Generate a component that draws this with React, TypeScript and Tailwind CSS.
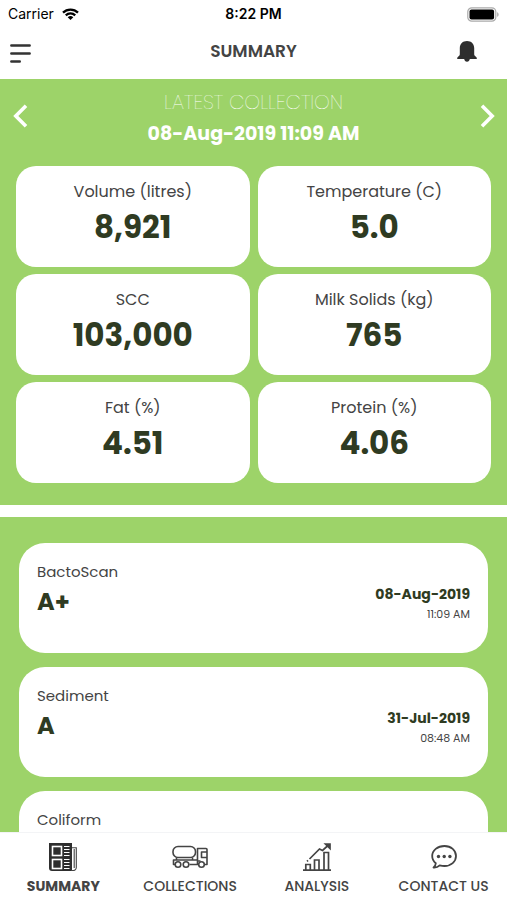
type IconProps = { className?: string };

type Test = { name: string; grade?: string; date?: string; time?: string };

const readings = [
  { label: 'Volume (litres)', value: '8,921' },
  { label: 'Temperature (C)', value: '5.0' },
  { label: 'SCC', value: '103,000' },
  { label: 'Milk Solids (kg)', value: '765' },
  { label: 'Fat (%)', value: '4.51' },
  { label: 'Protein (%)', value: '4.06' },
];

const tests: Test[] = [
  { name: 'BactoScan', grade: 'A+', date: '08-Aug-2019', time: '11:09 AM' },
  { name: 'Sediment', grade: 'A', date: '31-Jul-2019', time: '08:48 AM' },
  { name: 'Coliform' },
];

const tabs = [
  { name: 'SUMMARY', icon: NewsIcon, size: 'size-7', active: true },
  { name: 'COLLECTIONS', icon: TankerIcon, size: 'h-6 w-9' },
  { name: 'ANALYSIS', icon: ChartIcon, size: 'size-7' },
  { name: 'CONTACT US', icon: ChatIcon, size: 'h-6 w-[26px]' },
];

function NewsIcon({ className }: IconProps) {
  return (
    <svg viewBox="0 0 28 28" className={className} aria-hidden="true">
      <path d="M0 0h23v28H3a3 3 0 0 1-3-3z" fill="#2e2e2e" />
      <path d="M23 4.700h4.300v19.800a3 3 0 0 1-3 3H22M25.200 6v19" fill="none" stroke="#444" strokeWidth="1.100" />
      <g fill="none" stroke="#fff">
        <rect x="3.500" y="3.500" width="9" height="9" strokeWidth="1.600" />
        <rect x="3.500" y="16.500" width="9" height="9" strokeWidth="1.600" />
        <path d="M15 3.500h5.500M15 6.500h5.500M15 9.500h5.500M15 12.500h5.500M15 16.500h5.500M15 19.500h5.500M15 22.500h5.500M15 25.500h5.500" strokeWidth="1.200" />
      </g>
    </svg>
  );
}

function TankerIcon({ className }: IconProps) {
  return (
    <svg viewBox="0 0 36 24" className={className} fill="none" stroke="currentColor" strokeWidth="1.600" strokeLinejoin="round" aria-hidden="true">
      <rect x="1" y="1.500" width="22.500" height="11" rx="5" />
      <path d="M4.500 12.500v2.500M20.500 12.500v2.500M3 19.500H1.500V15H25M17.500 19.500h8.500" />
      <path d="M25.500 19V3.500H34a1 1 0 0 1 1 1v15h-2M35 7h-5.500v5.500H35M25.500 16h3" />
      <circle cx="6" cy="19.500" r="2.800" />
      <circle cx="14" cy="19.500" r="2.800" />
      <circle cx="29.500" cy="19.500" r="2.800" />
    </svg>
  );
}

function ChartIcon({ className }: IconProps) {
  return (
    <svg viewBox="0 0 28 28" className={className} fill="none" stroke="currentColor" strokeWidth="1.700" aria-hidden="true">
      <path d="M0 27.100h28M2.800 27v-5.500h4.500V27M11.500 27V17H16v10M21 27V9.500h4.500V27" />
      <path d="M6.500 16l10-10 3 1.500L25 2.500M4 18.300l1-1" />
      <path d="M22.500 1H27v4.500z" fill="currentColor" />
    </svg>
  );
}

function ChatIcon({ className }: IconProps) {
  return (
    <svg viewBox="0 0 26 24" className={className} fill="none" stroke="currentColor" strokeWidth="1.800" strokeLinejoin="round" aria-hidden="true">
      <path d="M13.500 1C6.500 1 1.200 5.300 1.200 11c0 3 1.400 5.500 3.600 7.300-.1 1.800-.8 3.200-2.300 4.200 2.500.2 4.600-.6 6.200-2.200 1.500.4 3.100.7 4.800.7 6.600 0 11.500-4.400 11.500-10S20.100 1 13.500 1z" />
      <g fill="currentColor" stroke="none">
        <circle cx="7.500" cy="11.500" r="1.700" />
        <circle cx="13.200" cy="11.500" r="1.700" />
        <circle cx="18.900" cy="11.500" r="1.700" />
      </g>
    </svg>
  );
}

function StatusBar() {
  return (
    <div className="grid h-7 shrink-0 grid-cols-3 items-center px-2 font-[Inter,sans-serif] text-sm text-black">
      <div className="flex items-center gap-2">
        <span>Carrier</span>
        <svg viewBox="0 0 17 12" className="h-3 w-[17px]" fill="none" stroke="currentColor" strokeWidth="2.300" aria-hidden="true">
          <path d="M1 4.600a10.700 10.700 0 0 1 15 0M3.800 7.400a6.700 6.700 0 0 1 9.400 0" />
          <path d="M8.500 12L5.700 9.300a4 4 0 0 1 5.600 0z" fill="currentColor" stroke="none" />
        </svg>
      </div>
      <span className="text-center font-semibold">8:22 PM</span>
      <svg viewBox="0 0 32 15" className="h-[15px] w-8 justify-self-end" aria-hidden="true">
        <rect x="0.800" y="0.800" width="28" height="13.400" rx="4" fill="none" stroke="#aaa" strokeWidth="1.200" />
        <rect x="2.500" y="2.500" width="24.600" height="10" rx="2" fill="#000" />
        <path d="M30.300 5.200c1.600.6 1.600 4 0 4.600z" fill="#999" />
      </svg>
    </div>
  );
}

export default function App() {
  return (
    <div className="flex h-screen flex-col bg-white font-[Poppins,Inter,sans-serif] text-[#444]">
      <StatusBar />

      <header className="flex h-[51px] shrink-0 items-center justify-between pr-5 pb-1 pl-2.5">
        <button aria-label="Menu" className="w-[50px] pt-1">
          <svg viewBox="0 0 21 20" className="h-5 w-[21px]" stroke="#333" strokeWidth="2.400" strokeLinecap="round" aria-hidden="true">
            <path d="M1.300 1.500h18.400M1.300 9.500h18.400M1.300 17.500h8.500" />
          </svg>
        </button>
        <h1 className="text-[17px] font-semibold">SUMMARY</h1>
        <button aria-label="Notifications" className="flex w-10 justify-center">
          <svg viewBox="0 0 20 21" className="h-[21px] w-5" fill="#2e2e2e" aria-hidden="true">
            <path d="M10 0C5.700 0 2.800 2.800 2.800 7v6.300c0 1-.8 1.800-2.100 2.900C-.4 17.200-.2 18 1 18h6.200c.2 1.500 1.300 2.800 2.800 2.800s2.600-1.300 2.800-2.800H19c1.200 0 1.400-.8.3-1.800-1.300-1.100-2.100-1.900-2.100-2.900V7c0-4.200-2.900-7-7.200-7z" />
          </svg>
        </button>
      </header>

      <main className="min-h-0 flex-1 overflow-y-auto [scrollbar-width:none]">
        <section className="bg-[#9dd369] px-4 pb-[22px]">
          <div className="flex h-[87px] items-start justify-between pt-[9px]">
            <button aria-label="Previous collection" className="-ml-1 pt-4">
              <svg viewBox="0 0 16 24" className="h-6 w-4" fill="none" stroke="#fff" strokeWidth="3.600" aria-hidden="true">
                <path d="M14 1.800L3.800 12 14 22.200" />
              </svg>
            </button>
            <div className="text-center text-white">
              <h2 className="text-xl leading-7 font-extralight">LATEST COLLECTION</h2>
              <p className="text-[19px] leading-9 font-bold">08-Aug-2019 11:09 AM</p>
            </div>
            <button aria-label="Next collection" className="-mr-1 pt-4">
              <svg viewBox="0 0 16 24" className="h-6 w-4" fill="none" stroke="#fff" strokeWidth="3.600" aria-hidden="true">
                <path d="M3 1.800L13.200 12 3 22.200" />
              </svg>
            </button>
          </div>
          <div className="grid grid-cols-2 gap-x-2 gap-y-[7px]">
            {readings.map(({ label, value }) => (
              <div key={label} className="h-[101px] rounded-[20px] bg-white pt-3.5 text-center">
                <p className="text-base leading-6">{label}</p>
                <p className="text-[31px] leading-[46px] font-bold text-[#2f3b22]">{value}</p>
              </div>
            ))}
          </div>
        </section>

        <section className="mt-3 flex flex-col gap-3.5 bg-[#9dd369] px-[19px] py-[26px]">
          {tests.map(({ name, grade, date, time }) => (
            <article key={name} className="flex h-[110px] shrink-0 justify-between rounded-[26px] bg-white px-[18px]">
              <div className="pt-[17px]">
                <h3 className="text-[15px] leading-6">{name}</h3>
                {grade && <p className="text-2xl leading-9 font-bold text-[#2f3b22]">{grade}</p>}
              </div>
              {date && (
                <div className="pt-[41px] text-right">
                  <p className="text-sm leading-5 font-bold text-[#2f3b22]">{date}</p>
                  <p className="text-[11px] leading-5">{time}</p>
                </div>
              )}
            </article>
          ))}
        </section>
      </main>

      <nav className="grid h-[68px] shrink-0 grid-cols-4 border-t border-gray-100 pt-2">
        {tabs.map(({ name, icon: Icon, size, active }) => (
          <a key={name} href="#" className="flex flex-col items-center gap-[3px] whitespace-nowrap">
            <span className="flex h-8 items-center">
              <Icon className={size} />
            </span>
            <span className={active ? 'text-sm font-bold' : 'text-sm font-medium'}>{name}</span>
          </a>
        ))}
      </nav>
    </div>
  );
}
